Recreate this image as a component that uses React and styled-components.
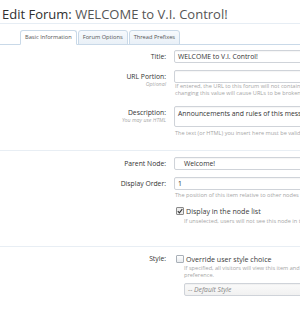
import styled, { createGlobalStyle } from 'styled-components';

const GlobalStyle = createGlobalStyle`
  html, body {
    margin: 0;
    padding: 0;
    background: #fff;
    overflow: hidden;
  }
  body {
    font-family: 'Open Sans', 'Noto Sans', sans-serif;
    color: #333;
  }
`;

const Page = styled.div`
  width: 300px;
  height: 309px;
  overflow: hidden;
`;

const TitleBar = styled.div`
  margin-top: 6px;
  padding: 0 0 1px 2px;
  border-bottom: 1px solid #e6edf4;
`;

const Heading = styled.h1`
  margin: 0;
  font-size: 13px;
  line-height: 16px;
  font-weight: 400;
  white-space: nowrap;
  color: #555;

  em {
    font-style: normal;
    color: #2f2f2f;
  }
`;

const TabBar = styled.div`
  display: flex;
  margin-top: 6px;
  padding-left: 20px;
  border-bottom: 1px solid #c9d9e8;
`;

const Tab = styled.div`
  height: 13px;
  padding: 0 4px;
  margin-right: 1px;
  margin-bottom: -1px;
  border: 1px solid #c9d9e8;
  border-bottom-color: ${({ $active }) => ($active ? '#fff' : '#c9d9e8')};
  border-radius: 3px 3px 0 0;
  background: ${({ $active }) => ($active ? '#fff' : 'linear-gradient(#f7fafd, #e9f0f7)')};
  font-size: 5.7px;
  line-height: 13px;
  color: #555;
  white-space: nowrap;
`;

const Row = styled.div`
  display: grid;
  grid-template-columns: 166px 1fr;
  column-gap: 8px;
  margin-top: ${({ $gap }) => $gap}px;
`;

const Stack = styled.div`
  margin-top: ${({ $gap }) => $gap}px;
`;

const Label = styled.div`
  text-align: right;
  padding-top: ${({ $top = 3 }) => $top}px;
  font-size: 6.8px;
  line-height: 8px;
  color: #333;
  white-space: nowrap;
`;

const SubLabel = styled.div`
  font-size: 5.3px;
  line-height: 7px;
  font-style: italic;
  color: #aaa;
`;

const Control = styled.div`
  min-width: 0;
`;

const Field = styled.div`
  box-sizing: border-box;
  width: 200px;
  height: ${({ $h = 13 }) => $h}px;
  padding: ${({ $pad = '0 3px' }) => $pad};
  border: 1px solid #cfd3d9;
  border-radius: 2px;
  background: #fff;
  box-shadow: inset 0 1px 1px rgba(0, 0, 0, 0.04);
  font-size: 6.8px;
  line-height: 11px;
  color: #333;
  white-space: nowrap;
  overflow: hidden;
`;

const Picker = styled(Field)`
  margin-top: ${({ $gap = 0 }) => $gap}px;
  margin-left: ${({ $indent = 0 }) => $indent}px;
  padding-left: ${({ $textIndent = 3 }) => $textIndent}px;
  background: ${({ $muted }) => ($muted ? 'linear-gradient(#fafafa, #f1f1f1)' : '#fff')};
  color: ${({ $muted }) => ($muted ? '#888' : '#333')};
  font-style: ${({ $muted }) => ($muted ? 'italic' : 'normal')};
`;

const Hint = styled.div`
  margin-top: ${({ $gap = 0 }) => $gap}px;
  margin-left: ${({ $indent = 1 }) => $indent}px;
  font-size: 5.6px;
  line-height: 7px;
  color: #a6a6a6;
  white-space: nowrap;
`;

const Divider = styled.hr`
  margin: ${({ $gap }) => $gap}px 0 0;
  border: 0;
  border-top: 1px solid #e8eef4;
`;

const CheckRow = styled.label`
  display: flex;
  align-items: center;
  gap: 2px;
  margin-left: 2px;
  font-size: 7.1px;
  line-height: 10px;
  color: #3a3a3a;
  white-space: nowrap;
`;

const Box = styled.span`
  box-sizing: border-box;
  display: inline-flex;
  align-items: center;
  justify-content: center;
  width: 8px;
  height: 8px;
  border: 1px solid ${({ $checked }) => ($checked ? '#8a8a8a' : '#a9b0b8')};
  border-radius: 1px;
  background: ${({ $checked }) => ($checked ? '#ececec' : 'linear-gradient(#fff, #e8ebee)')};
`;

const Check = ({ checked, children }) => (
  <CheckRow>
    <Box $checked={checked}>
      {checked && (
        <svg width="6" height="6" viewBox="0 0 6 6">
          <path d="M0.8 3.2 L2.4 4.8 L5.3 1" fill="none" stroke="#333" strokeWidth="1.1" />
        </svg>
      )}
    </Box>
    {children}
  </CheckRow>
);

const App = () => {
  return (
    <Page>
      <GlobalStyle />
      <TitleBar>
        <Heading>
          <em>Edit Forum:</em> WELCOME to V.I. Control!
        </Heading>
      </TitleBar>

      <TabBar>
        <Tab $active>Basic Information</Tab>
        <Tab>Forum Options</Tab>
        <Tab>Thread Prefixes</Tab>
      </TabBar>

      <Row $gap={5}>
        <Label>Title:</Label>
        <Control>
          <Field>WELCOME to V.I. Control!</Field>
        </Control>
      </Row>

      <Row $gap={7}>
        <Label>
          URL Portion:
          <SubLabel>Optional</SubLabel>
        </Label>
        <Control>
          <Field />
          <Hint>
            If entered, the URL to this forum will not contain the ID. Note that
            <br />
            changing this value will cause URLs to be broken.
          </Hint>
        </Control>
      </Row>

      <Row $gap={9}>
        <Label>
          Description:
          <SubLabel>You may use HTML</SubLabel>
        </Label>
        <Control>
          <Field $h={21} $pad="1px 3px">Announcements and rules of this message board.</Field>
          <Hint $gap={3}>The text (or HTML) you insert here must be valid.</Hint>
        </Control>
      </Row>

      <Divider $gap={13} />

      <Row $gap={6}>
        <Label>Parent Node:</Label>
        <Control>
          <Picker $textIndent={9}>Welcome!</Picker>
        </Control>
      </Row>

      <Row $gap={7}>
        <Label>Display Order:</Label>
        <Control>
          <Field>1</Field>
          <Hint $gap={2}>The position of this item relative to other nodes with the same parent.</Hint>
          <Stack $gap={7}>
            <Check checked>Display in the node list</Check>
            <Hint $gap={2} $indent={10}>
              If unselected, users will not see this node in the list. However, they may still access it.
            </Hint>
          </Stack>
        </Control>
      </Row>

      <Divider $gap={21} />

      <Row $gap={7}>
        <Label $top={1}>Style:</Label>
        <Control>
          <Check>Override user style choice</Check>
          <Hint $gap={1} $indent={10}>
            If specified, all visitors will view this item and its contents using the selected style, regardless of their personal
            <br />
            preference.
          </Hint>
          <Picker $indent={10} $gap={4} $muted>
            -- Default Style
          </Picker>
        </Control>
      </Row>
    </Page>
  );
};

export default App;
